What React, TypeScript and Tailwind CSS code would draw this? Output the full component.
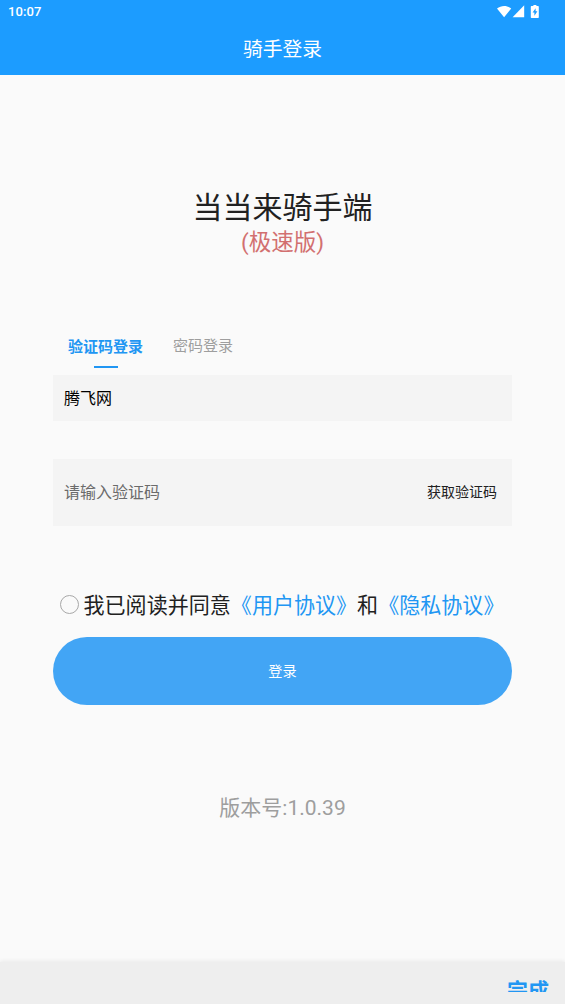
import React, { useState } from 'react';

const StatusIcons: React.FC = () => (
  <svg width="44" height="15" viewBox="0 0 44 15" fill="#ffffff">
    <path d="M0 3.6C4.1 0.2 10.1 0.2 14.2 3.6L7.1 12.3Z" />
    <path d="M27.2 0.2V12.3H15.6Z" />
    <path
      fillRule="evenodd"
      d="M36.4 0h3v1.1h1.7c.4 0 .7.3.7.7v10.4c0 .4-.3.7-.7.7h-6.6c-.4 0-.7-.3-.7-.7V1.8c0-.4.3-.7.7-.7h1.9zM38.6 3.2l-3 4.2h1.8v3.4l3-4.6h-1.8z"
    />
  </svg>
);

const TABS = ['验证码登录', '密码登录'];

const App: React.FC = () => {
  const [tab, setTab] = useState(0);
  const [agreed, setAgreed] = useState(false);

  return (
    <div className="flex h-[1004px] w-[565px] flex-col overflow-hidden bg-[#fafafa] font-['Roboto','Noto_Sans_CJK_SC',sans-serif] text-[#212121]">
      <header className="h-[75px] shrink-0 bg-[#1c9cff] text-white">
        <div className="flex h-6 items-center justify-between pl-2 pr-6">
          <span className="text-[13px] font-medium tracking-[0.1px]">10:07</span>
          <StatusIcons />
        </div>
        <h1 className="pt-[2px] text-center text-[19.8px] leading-[48px]">骑手登录</h1>
      </header>

      <main className="flex flex-1 flex-col px-[53px]">
        <div className="mt-[113px] text-center">
          <h2 className="text-[30px] leading-10">当当来骑手端</h2>
          <p className="text-[22.5px] leading-7 text-[#d27070]">(极速版)</p>
        </div>

        {/* Login mode */}
        <nav className="mt-[76px] flex h-[43px] gap-[30px] pl-[15px] text-[15px]">
          {TABS.map((label, i) => (
            <button
              key={label}
              onClick={() => setTab(i)}
              className={`flex flex-col items-center ${tab === i ? 'font-bold leading-[30px] text-[#2196f3]' : 'leading-7 text-[#9e9e9e]'}`}
            >
              {label}
              {tab === i && <span className="mt-1 h-[2px] w-6 bg-[#2196f3]" />}
            </button>
          ))}
        </nav>

        <div className="flex h-[46px] items-center bg-[#f4f4f4] px-[11px] pt-[2px] text-base text-black">腾飞网</div>

        <div className="mt-[38px] flex h-[67px] items-center justify-between bg-[#f4f4f4] pl-[11px] pr-[15px]">
          <span className="pt-px text-base text-[#6b6b6b]">请输入验证码</span>
          <button className="text-[14px]">获取验证码</button>
        </div>

        {/* Terms */}
        <div className="mt-[62px] flex h-8 items-center pl-[6.5px] text-[21.05px] whitespace-nowrap">
          <button
            onClick={() => setAgreed(!agreed)}
            className={`mr-[5px] size-[19px] shrink-0 rounded-full border border-[#a8a8a8] ${agreed ? 'bg-[#2196f3]' : ''}`}
          />
          <div className="flex pt-[3px]">
            <span>我已阅读并同意</span>
            <span className="text-[#2196f3]">《用户协议》</span>
            <span>和</span>
            <span className="text-[#2196f3]">《隐私协议》</span>
          </div>
        </div>

        <button className="mt-[17px] h-[67.5px] shrink-0 rounded-full bg-[#42a5f5] pt-[2px] text-[14.2px] text-white">登录</button>

        <p className="mt-[87px] text-center text-[21px] leading-8 text-[#9e9e9e]">版本号:1.0.39</p>
      </main>

      {/* Keyboard toolbar */}
      <footer className="flex h-[42px] shrink-0 justify-end bg-[#eeeeee] pr-4 pt-[14px] shadow-[0_-1px_4px_rgba(0,0,0,0.07)]">
        <span className="h-4 overflow-hidden text-[21px] font-bold leading-[30px] text-[#2196f3]">完成</span>
      </footer>
    </div>
  );
};

export default App;
